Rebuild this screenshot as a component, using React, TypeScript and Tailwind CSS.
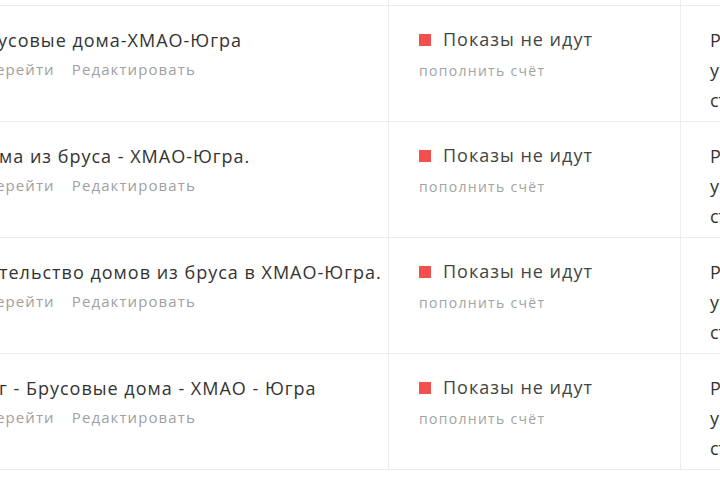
const rows = [
  { title: 'усовые дома-ХМАО-Югра', shift: '-ml-[2px]' },
  { title: 'ма из бруса - ХМАО-Югра.', shift: '-ml-[1px]' },
  { title: 'тельство домов из бруса в ХМАО-Югра.', shift: '-ml-[1px]' },
  { title: 'г - Брусовые дома - ХМАО - Югра', shift: '-ml-[1px]' },
];

function StatusCell() {
  return (
    <div className="w-[292px] shrink-0 border-r border-[#ececec] pl-[30px] pt-[21px]">
      <div className="flex items-center h-6">
        <span className="w-[12px] h-[12px] bg-[#f24f4f] mr-[12px] mt-[1px]" />
        <span className="text-[18px] leading-6 tracking-[1px] text-[#444]">Показы не идут</span>
      </div>
      <div className="mt-[10px] text-[14px] leading-5 tracking-[1.3px] text-[#a3a3a3]">пополнить счёт</div>
    </div>
  );
}

export default function App() {
  return (
    <div
      className="w-[720px] h-[480px] overflow-hidden bg-white"
      style={{ fontFamily: '"Open Sans", "Liberation Sans", sans-serif' }}
    >
      {/* хвост предыдущей строки */}
      <div className="flex h-[6px] border-b border-[#ececec]">
        <div className="w-[389px] shrink-0 border-r border-[#ececec]" />
        <div className="w-[292px] shrink-0 border-r border-[#ececec]" />
        <div className="flex-1" />
      </div>

      {rows.map((row, i) => (
        <div key={i} className="flex h-[116px] border-b border-[#ececec]">
          <div className="w-[389px] shrink-0 border-r border-[#ececec] overflow-hidden pt-[22px]">
            <div className={`text-[18px] leading-6 tracking-[1px] text-[#333] whitespace-nowrap ${row.shift}`}>
              {row.title}
            </div>
            <div className="mt-[7px] flex text-[15px] leading-5 tracking-[1.1px] text-[#a0a0a0] whitespace-nowrap">
              <span className="-ml-[4px]">ерейти</span>
              <span className="ml-[17px]">Редактировать</span>
            </div>
          </div>
          <StatusCell />
          <div className="flex-1 overflow-hidden pl-[29px] pt-[19px] text-[18px] leading-[30px] text-[#333] whitespace-nowrap">
            <div>Ручное</div>
            <div>управление</div>
            <div>ставками</div>
          </div>
        </div>
      ))}
    </div>
  );
}
